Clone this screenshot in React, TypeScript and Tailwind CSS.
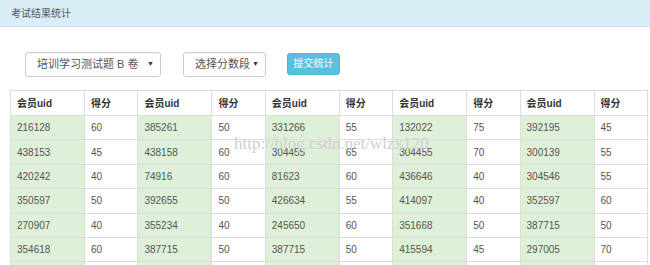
import React from 'react';

const rows: [string, string][][] = [
  [['216128', '60'], ['385261', '50'], ['331266', '55'], ['132022', '75'], ['392195', '45']],
  [['438153', '45'], ['438158', '60'], ['304455', '65'], ['304455', '70'], ['300139', '55']],
  [['420242', '40'], ['74916', '60'], ['81623', '60'], ['436646', '40'], ['304546', '55']],
  [['350597', '50'], ['392655', '50'], ['426634', '55'], ['414097', '40'], ['352597', '60']],
  [['270907', '40'], ['355234', '40'], ['245650', '60'], ['351668', '50'], ['387715', '50']],
  [['354618', '60'], ['387715', '50'], ['387715', '50'], ['415594', '45'], ['297005', '70']],
  [['', ''], ['', ''], ['', ''], ['', ''], ['', '']],
];

const font = { fontFamily: '"Liberation Sans", Arial, "Noto Sans CJK SC", sans-serif' };

export default function App() {
  return (
    <div className="relative h-[265px] w-[650px] overflow-hidden bg-white" style={font}>
      <div className="flex h-[27px] items-center border-b border-[#cfe6f2] bg-[#d9edf7] px-[11px] text-[10px] text-[#555]">
        考试结果统计
      </div>

      <div className="flex items-center pl-[25px] pt-[25px]">
        <div className="flex h-[25px] w-[136px] items-center justify-between rounded-[3px] border border-[#ccc] bg-white pl-[11px] pr-[6px] text-[11px] text-[#555] shadow-[inset_0_1px_1px_rgba(0,0,0,0.05)]">
          <span>培训学习测试题 B 卷</span>
          <span className="text-[7px] text-[#333]">▼</span>
        </div>
        <div className="ml-[22px] flex h-[25px] w-[83px] items-center justify-between rounded-[3px] border border-[#ccc] bg-white pl-[11px] pr-[6px] text-[11px] text-[#555] shadow-[inset_0_1px_1px_rgba(0,0,0,0.05)]">
          <span>选择分数段</span>
          <span className="text-[7px] text-[#333]">▼</span>
        </div>
        <button className="ml-[21px] h-[22px] w-[53px] -translate-y-[1px] rounded-[3px] border border-[#46b8da] bg-[#5bc0de] text-[10px] text-white">
          提交统计
        </button>
      </div>

      <table className="ml-[10px] mt-[13px] w-[637px] table-fixed border-collapse text-[10px]">
        <colgroup>
          {[0, 1, 2, 3, 4].map((i) => (
            <React.Fragment key={i}>
              <col className="w-[74px]" />
              <col className="w-[53.4px]" />
            </React.Fragment>
          ))}
        </colgroup>
        <thead>
          <tr className="h-[25px]">
            {[0, 1, 2, 3, 4].map((i) => (
              <React.Fragment key={i}>
                <th className="border border-[#ddd] px-[6px] text-left font-bold text-[#333]">会员uid</th>
                <th className="border border-[#ddd] px-[6px] text-left font-bold text-[#333]">得分</th>
              </React.Fragment>
            ))}
          </tr>
        </thead>
        <tbody>
          {rows.map((row, r) => (
            <tr key={r} className="h-[24.4px]">
              {row.map(([uid, score], i) => (
                <React.Fragment key={i}>
                  <td className="border border-[#ddd] bg-[#dff0d8] px-[6px] text-[#555]">{uid}</td>
                  <td className="border border-[#ddd] px-[6px] text-[#555]">{score}</td>
                </React.Fragment>
              ))}
            </tr>
          ))}
        </tbody>
      </table>

      <div
        className="pointer-events-none absolute left-[234px] top-[131px] text-[17px] text-[#cfcfcf]"
        style={{ fontFamily: '"Liberation Serif", "Times New Roman", serif' }}
      >
        http://blog.csdn.net/wlzx120
      </div>
    </div>
  );
}
